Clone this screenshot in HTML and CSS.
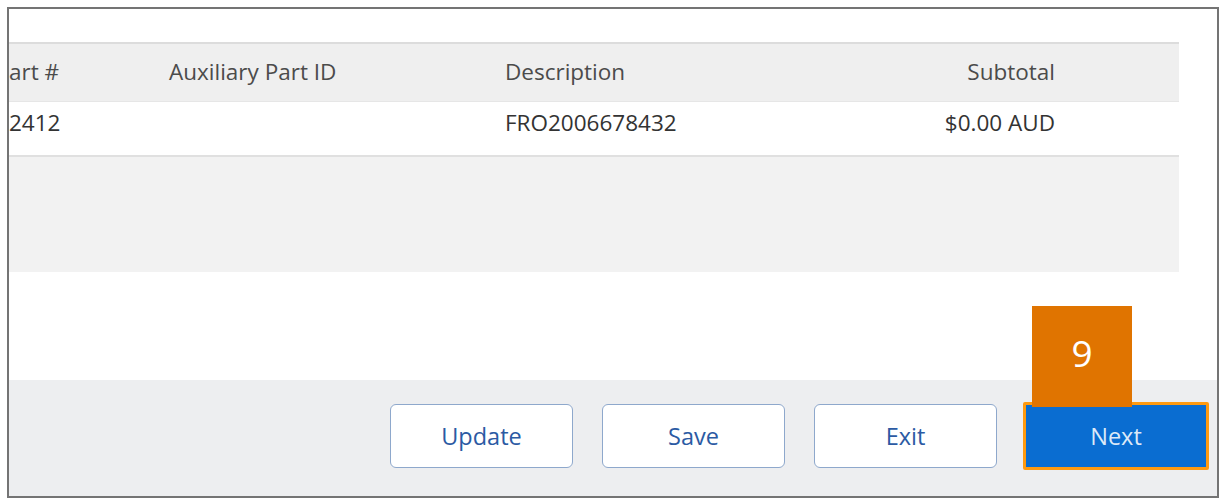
FILE: index.html
```html
<!DOCTYPE html>
<html>
<head>
<meta charset="utf-8">
<link rel="stylesheet" href="styles.css">
</head>
<body>
<div class="frame">
  <div class="top-space"></div>
  <div class="table">
    <div class="row head">
      <div class="cell">art #</div>
      <div class="cell">Auxiliary Part ID</div>
      <div class="cell">Description</div>
      <div class="cell num">Subtotal</div>
    </div>
    <div class="row body">
      <div class="cell">2412</div>
      <div class="cell"></div>
      <div class="cell">FRO2006678432</div>
      <div class="cell num">$0.00 AUD</div>
    </div>
    <div class="filler"></div>
  </div>
  <div class="mid-space"></div>
  <div class="footer">
    <button class="btn">Update</button>
    <button class="btn">Save</button>
    <button class="btn">Exit</button>
    <div class="next-wrap">
      <button class="btn primary">Next</button>
      <div class="badge">9</div>
    </div>
  </div>
</div>
</body>
</html>
```

FILE: styles.css
```css
* { box-sizing: border-box; }
html, body { margin: 0; padding: 0; background: #ffffff; }
body {
  font-family: "Open Sans", "Liberation Sans", Arial, sans-serif;
  padding: 7px 0 0 7px;
}
.frame {
  width: 1212px;
  height: 491px;
  border: 2px solid #747474;
  background: #ffffff;
  display: flex;
  flex-direction: column;
  overflow: hidden;
}
.top-space { height: 33px; flex: none; }
.table {
  flex: none;
  margin-right: 38px;
}
.row {
  display: grid;
  grid-template-columns: 160px 336px 1fr auto;
  align-items: center;
  font-size: 22.5px;
  padding-right: 124px;
}
.row.head {
  height: 60px;
  background: #efefef;
  border-top: 2px solid #dcdcdc;
  border-bottom: 1px solid #e6e6e6;
  color: #4b4b4b;
  padding-bottom: 2px;
}
.row.body {
  height: 55px;
  background: #ffffff;
  border-bottom: 2px solid #e0e0e0;
  color: #333333;
  padding-bottom: 13px;
}
.cell { white-space: nowrap; }
.num { text-align: right; }
.filler { height: 115px; background: #f2f2f2; }
.mid-space { height: 108px; flex: none; }
.footer {
  flex: 1;
  background: #edeef0;
  display: flex;
  align-items: center;
  justify-content: flex-end;
  gap: 29px;
  padding-right: 8px;
  padding-bottom: 5px;
}
.btn {
  width: 183px;
  height: 64px;
  border: 1.5px solid #8ea8cc;
  border-radius: 6px;
  background: #ffffff;
  color: #2b5aa3;
  font-family: "Open Sans", "Liberation Sans", Arial, sans-serif;
  font-size: 23.5px;
  padding: 0;
}
.next-wrap {
  position: relative;
  margin-left: -3px;
}
.btn.primary {
  width: 186px;
  height: 68px;
  border: 3px solid #ff9a10;
  border-radius: 2px;
  background: #0a6dd1;
  color: #dce9f8;
  display: block;
}
.badge {
  position: absolute;
  left: 9px;
  top: -96px;
  width: 100px;
  height: 101px;
  background: #e07400;
  color: #ffffff;
  font-family: "Open Sans", "Liberation Sans", sans-serif;
  font-size: 37px;
  display: flex;
  align-items: center;
  justify-content: center;
  padding-bottom: 8px;
}
```
